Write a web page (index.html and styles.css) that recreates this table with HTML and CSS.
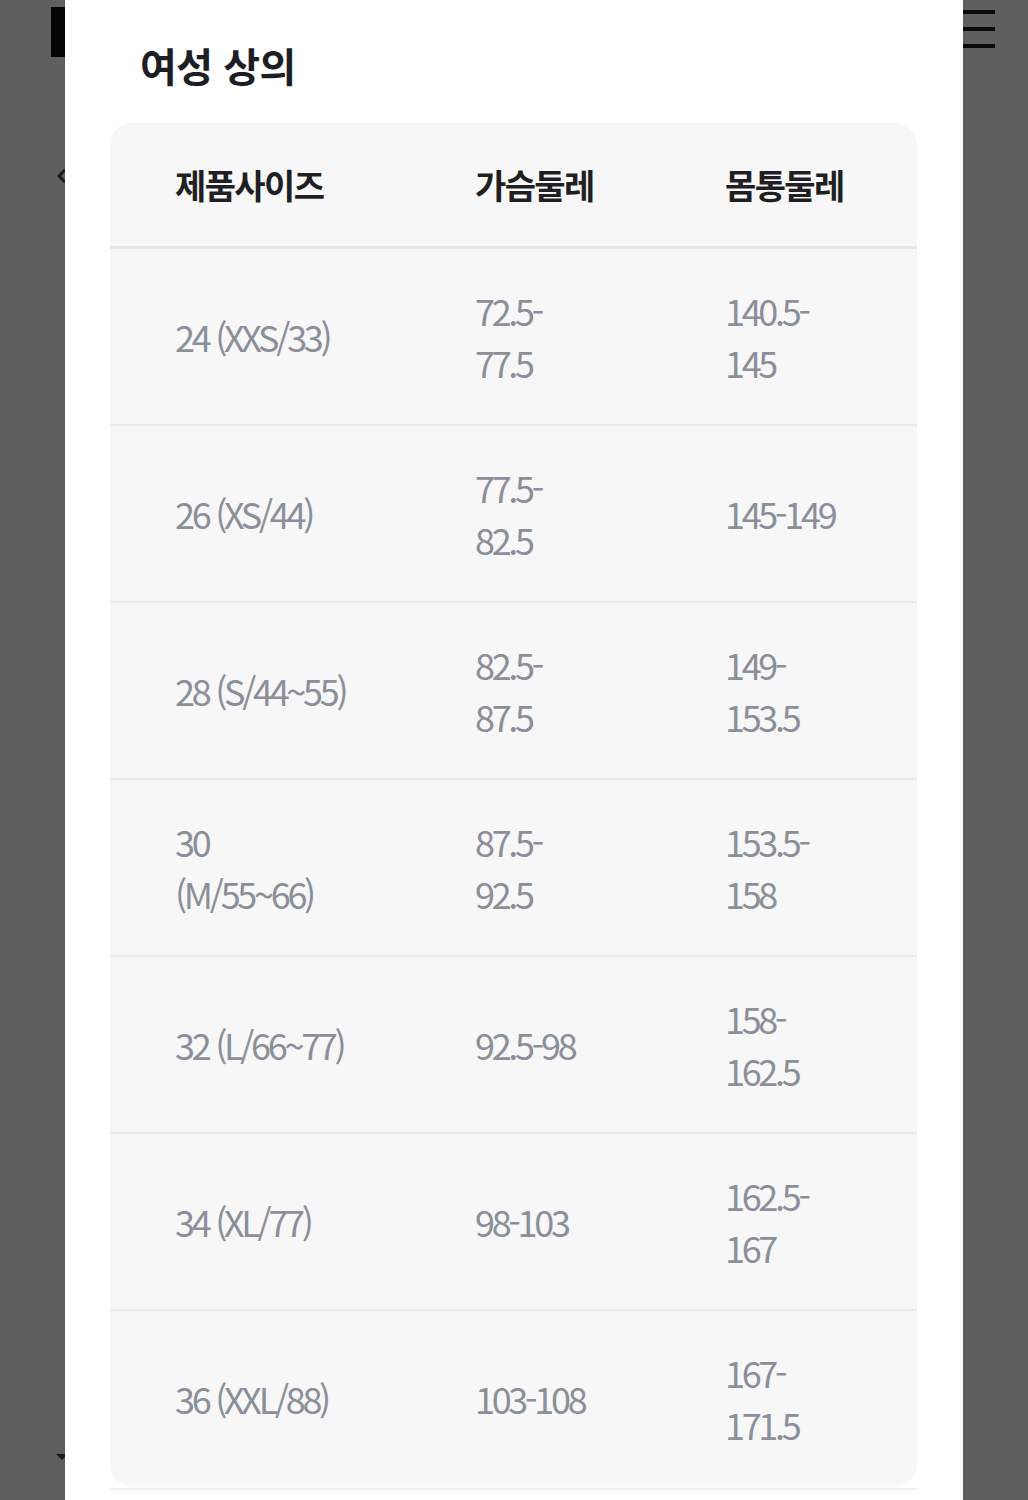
FILE: index.html
```html
<!DOCTYPE html>
<html lang="ko">
<head>
<meta charset="utf-8">
<title>여성 상의</title>
<link rel="stylesheet" href="styles.css">
</head>
<body>
<div class="backdrop">
  <div class="logo-mark"></div>
  <svg class="chevron" width="10" height="16" viewBox="0 0 10 16"><path d="M8 2 L2 8 L8 14" fill="none" stroke="#1a1a1a" stroke-width="3"/></svg>
  <div class="hamburger"><span></span><span></span><span></span></div>
  <svg class="caret" width="12" height="8" viewBox="0 0 12 8"><path d="M0 0 H12 L6 6 Z" fill="#1a1a1a"/></svg>
</div>
<div class="modal">
  <h2 class="title">여성 상의</h2>
  <div class="table-wrap">
    <table class="size-table">
      <thead>
        <tr><th>제품사이즈</th><th>가슴둘레</th><th>몸통둘레</th></tr>
      </thead>
      <tbody>
        <tr><td>24 (XXS/33)</td><td>72.5-<br>77.5</td><td>140.5-<br>145</td></tr>
        <tr><td>26 (XS/44)</td><td>77.5-<br>82.5</td><td>145-149</td></tr>
        <tr><td>28 (S/44~55)</td><td>82.5-<br>87.5</td><td>149-<br>153.5</td></tr>
        <tr><td>30<br>(M/55~66)</td><td>87.5-<br>92.5</td><td>153.5-<br>158</td></tr>
        <tr><td>32 (L/66~77)</td><td>92.5-98</td><td>158-<br>162.5</td></tr>
        <tr><td>34 (XL/77)</td><td>98-103</td><td>162.5-<br>167</td></tr>
        <tr><td>36 (XXL/88)</td><td>103-108</td><td>167-<br>171.5</td></tr>
      </tbody>
    </table>
  </div>
  <div class="table-rule"></div>
</div>
</body>
</html>
```

FILE: styles.css
```css
html, body {
  margin: 0;
  padding: 0;
}
body {
  background: #5f5f5f;
  font-family: "Noto Sans CJK KR", "Noto Sans", sans-serif;
  width: 1028px;
  height: 1500px;
  overflow: hidden;
  position: relative;
}
.backdrop {
  position: absolute;
  inset: 0;
}
.logo-mark {
  position: absolute;
  left: 51px;
  top: 7px;
  width: 16px;
  height: 50px;
  background: #050505;
}
.chevron {
  position: absolute;
  left: 57px;
  top: 168px;
}
.caret {
  position: absolute;
  left: 56px;
  top: 1454px;
}
.hamburger {
  position: absolute;
  left: 960px;
  top: 10px;
  width: 35px;
  display: flex;
  flex-direction: column;
  gap: 13px;
}
.hamburger span {
  display: block;
  height: 4px;
  background: #0a0a0a;
}
.modal {
  position: relative;
  margin-left: 65px;
  width: 898px;
  height: 1500px;
  background: #ffffff;
  padding: 0 46px 0 45px;
  box-sizing: border-box;
}
.title {
  margin: 0;
  padding: 38px 0 0 30px;
  height: 123px;
  box-sizing: border-box;
  font-size: 40px;
  line-height: 54px;
  font-weight: 700;
  letter-spacing: -0.5px;
  color: #1d1e24;
}
.table-wrap {
  background: #f7f7f7;
  border-radius: 22px;
  overflow: hidden;
}
.size-table {
  width: 100%;
  border-collapse: collapse;
  table-layout: fixed;
}
.size-table th:nth-child(1), .size-table td:nth-child(1) { width: 300px; }
.size-table th:nth-child(2), .size-table td:nth-child(2) { width: 250px; }
.size-table th {
  height: 124px;
  padding: 0 0 0 65px;
  text-align: left;
  font-size: 34px;
  font-weight: 700;
  letter-spacing: -1.6px;
  color: #1f1f24;
  border-bottom: 3px solid #e4e4e4;
  box-sizing: border-box;
}
.size-table td {
  height: 175px;
  padding: 0 0 0 65px;
  font-size: 36px;
  line-height: 52px;
  letter-spacing: -3.3px;
  color: #8a8f99;
  vertical-align: middle;
  border-bottom: 2px solid #ebebeb;
}
.size-table tbody tr:last-child td {
  border-bottom: none;
  height: 175px;
}
.table-rule {
  height: 2px;
  background: #eeeeee;
  margin-top: 2px;
}
```
